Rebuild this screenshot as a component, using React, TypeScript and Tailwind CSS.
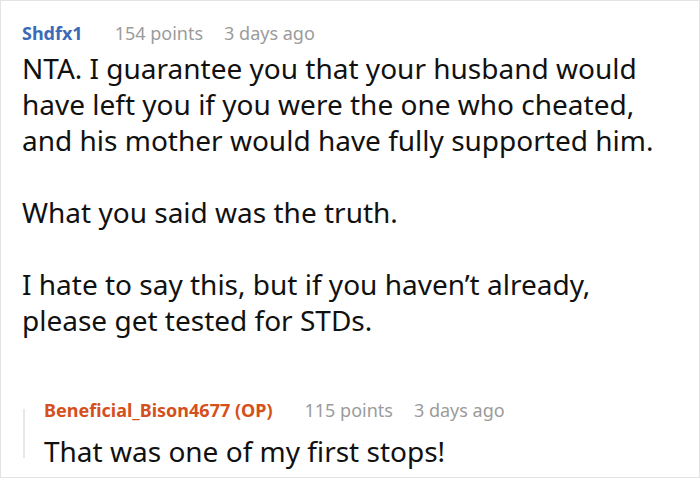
export default function App() {
  return (
    <div
      className="w-[700px] h-[478px] bg-white border border-[#e3e3e3] overflow-hidden"
      style={{ fontFamily: '"Noto Sans", "Open Sans", sans-serif' }}
    >
      <div className="pl-[21px] pt-[16px]">
        <div className="flex items-center text-[18px] leading-[32px]">
          <span className="font-bold text-[#3b6bb8] mr-[32px]">Shdfx1</span>
          <span className="text-[#9b9b9b] mr-[21px]">154 points</span>
          <span className="text-[#9b9b9b]">3 days ago</span>
        </div>
        <div className="mt-[1px] text-[28px] leading-[36px] text-[#111]">
          <p>
            NTA. I guarantee you that your husband would
            <br />
            have left you if you were the one who cheated,
            <br />
            and his mother would have fully supported him.
          </p>
          <p className="mt-[36px]">What you said was the truth.</p>
          <p className="mt-[36px]">
            I hate to say this, but if you haven’t already,
            <br />
            please get tested for STDs.
          </p>
        </div>
        <div className="flex mt-[56px] ml-[1px]">
          <div className="w-[2px] bg-[#e8e8e8] mt-[15px] h-[49px]" />
          <div className="pl-[19px]">
            <div className="flex items-center text-[18px] leading-[32px]">
              <span className="font-bold text-[#d4501c] mr-[32px]">Beneficial_Bison4677 (OP)</span>
              <span className="text-[#9b9b9b] mr-[21px]">115 points</span>
              <span className="text-[#9b9b9b]">3 days ago</span>
            </div>
            <p className="mt-[7px] text-[28px] leading-[36px] text-[#111]">That was one of my first stops!</p>
          </div>
        </div>
      </div>
    </div>
  );
}
